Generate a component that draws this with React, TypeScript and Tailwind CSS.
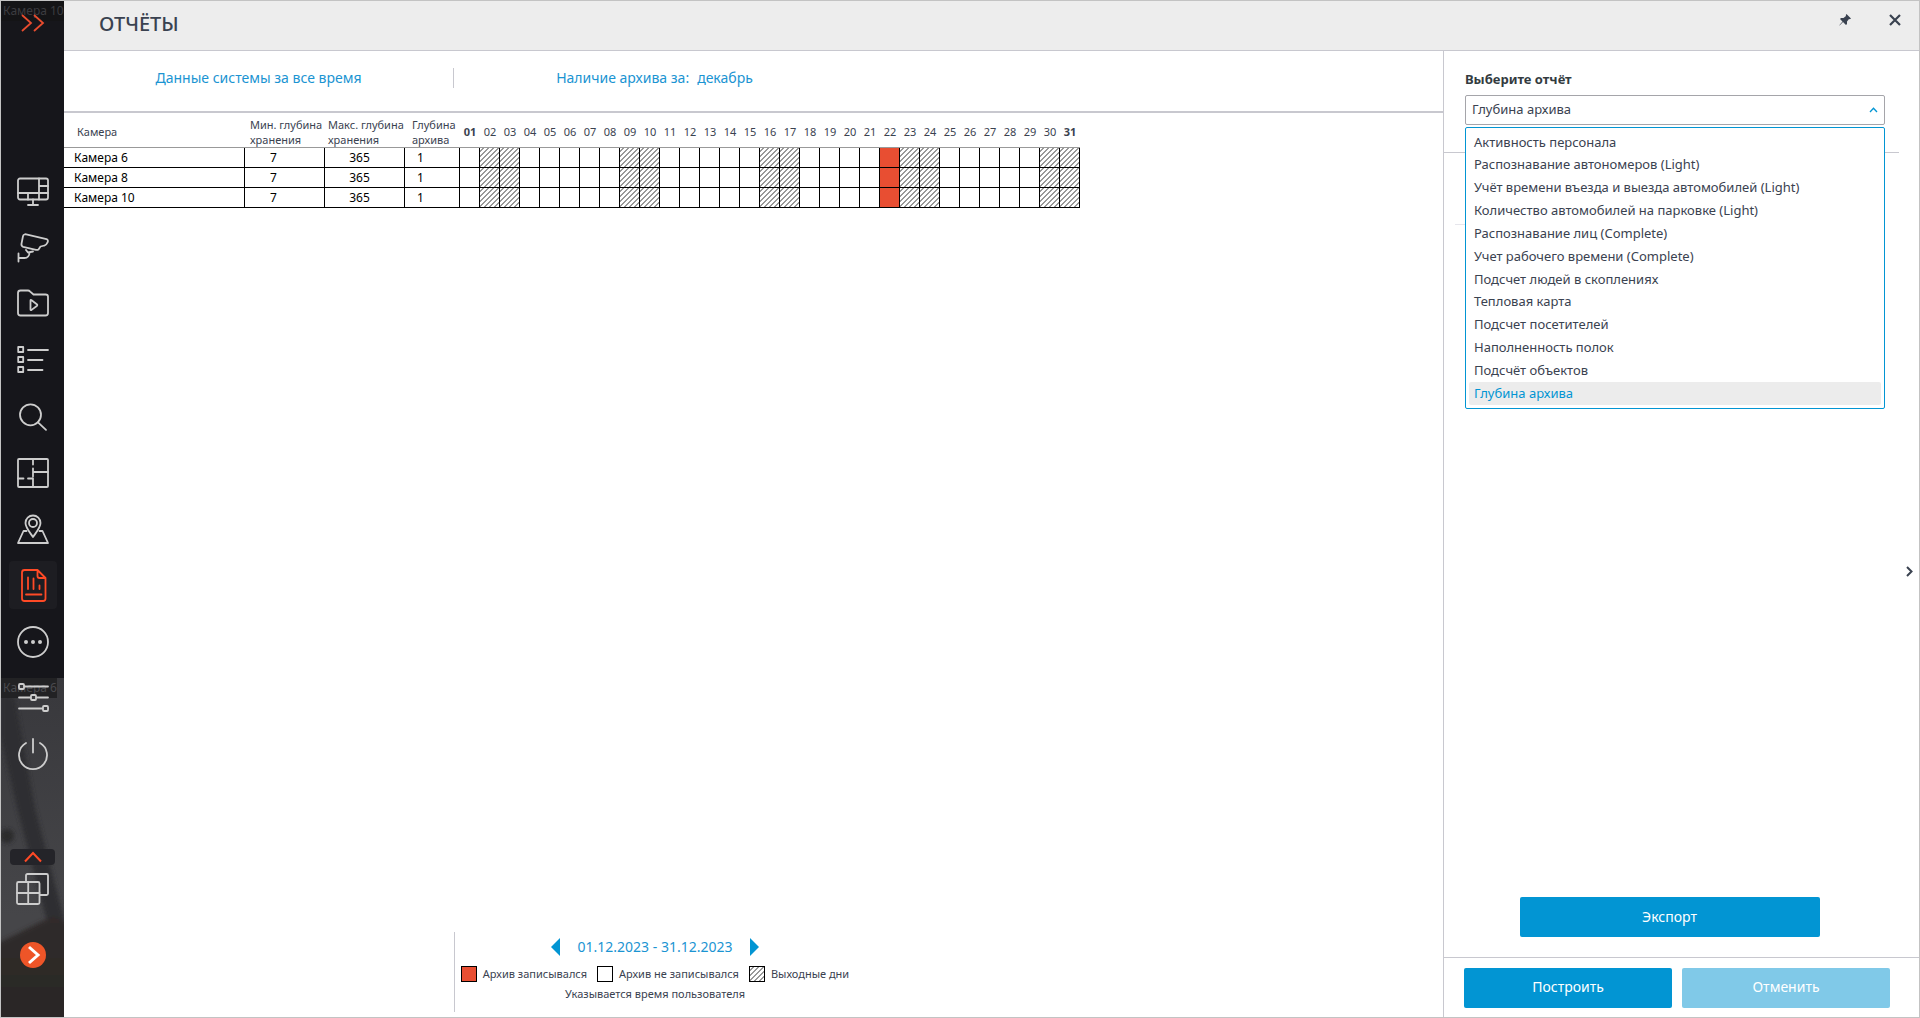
import { ReactNode } from "react";

const weekend = [2, 3, 9, 10, 16, 17, 23, 24, 30, 31];
const days = Array.from({ length: 31 }, (_, i) => i + 1);
const cameras = ["Камера 6", "Камера 8", "Камера 10"];
const reports = [
  "Активность персонала",
  "Распознавание автономеров (Light)",
  "Учёт времени въезда и выезда автомобилей (Light)",
  "Количество автомобилей на парковке (Light)",
  "Распознавание лиц (Complete)",
  "Учет рабочего времени (Complete)",
  "Подсчет людей в скоплениях",
  "Тепловая карта",
  "Подсчет посетителей",
  "Наполненность полок",
  "Подсчёт объектов",
  "Глубина архива",
];

const hatch =
  "bg-[linear-gradient(135deg,#fff_28%,#999_30%,#999_50%,#fff_50%,#fff_78%,#999_80%)] bg-size-[5px_5px]";

function Icon({ children }: { children: ReactNode }) {
  return (
    <svg
      className="size-9"
      viewBox="0 0 36 36"
      fill="none"
      stroke="currentColor"
      strokeWidth="1.8"
      strokeLinejoin="round"
      strokeLinecap="round"
      aria-hidden="true"
    >
      {children}
    </svg>
  );
}

const navItems: { label: string; icon: ReactNode; active?: boolean }[] = [
  {
    label: "Мониторы",
    icon: (
      <Icon>
        <rect x="3" y="4.500" width="30" height="21" rx="2" />
        <path d="M3 19H33M24 4.500V25.500M24 12H33M13 19V25.500M18 25.500V30.500M13 31H23" />
      </Icon>
    ),
  },
  {
    label: "Камеры",
    icon: (
      <Icon>
        <path d="M9.500 4.500C10 4.200 10.600 4.200 11.200 4.300L31.500 9.200C33 9.700 33.300 11 32.500 12.500C31.800 14 31.200 15.500 29.500 15.500L25.500 16.500L23.500 19.500C22.800 19.900 22 20 21 19.800L8.200 16.800C6.700 16.300 6.200 15.300 6.500 13.800L8 6.200C8.200 5.300 8.800 4.700 9.500 4.500Z" />
        <path d="M11 20L13 22.500L18 21.500M14.500 22.500C14.500 25.500 12.500 28 9.500 28H3.500M3.500 23.500V31.500" />
      </Icon>
    ),
  },
  {
    label: "Архив",
    icon: (
      <Icon>
        <path d="M3 7C3 5.500 4 4.500 5.500 4.500H13C14 4.500 14.500 4.900 15.200 5.600L18.500 8.500H30.500C32 8.500 33 9.300 33 10.800V27C33 28.500 32 29.500 30.500 29.500H5.500C4 29.500 3 28.500 3 27Z" />
        <path d="M15.500 14.500V23.500C15.500 24.200 16 24.300 16.600 23.900L21.800 20C22.500 19.400 22.500 18.800 21.800 18.200L16.600 14.200C16 13.800 15.500 13.900 15.500 14.500Z" />
      </Icon>
    ),
  },
  {
    label: "События",
    icon: (
      <Icon>
        <path d="M3.200 4h5v5h-5ZM3.200 14h5v5h-5ZM3.200 24h5v5h-5ZM13 7H33M13 17H27.500M13 27H27.500" />
      </Icon>
    ),
  },
  {
    label: "Поиск",
    icon: (
      <Icon>
        <circle cx="15.500" cy="15.800" r="10.500" />
        <path d="M23 23.300L31 30.800" />
      </Icon>
    ),
  },
  {
    label: "План",
    icon: (
      <Icon>
        <rect x="3" y="4" width="30" height="28" rx="1" />
        <path d="M18 4V9.500M18 13.500V21.500M18 17H33M3 23.500H8.500M13 23.500H18V32" />
      </Icon>
    ),
  },
  {
    label: "Карта",
    icon: (
      <Icon>
        <path d="M18 26C14.500 21 10.500 16.500 10.500 12A7.500 7.500 0 0 1 25.500 12C25.500 16.500 21.500 21 18 26Z" />
        <circle cx="18" cy="12" r="4" />
        <path d="M11.500 20H8.500L3 32H33L27.500 20H24.500" />
      </Icon>
    ),
  },
  {
    label: "Отчёты",
    active: true,
    icon: (
      <Icon>
        <path d="M9.500 3H22.500L30.500 11V31.500C30.500 33 29.500 34 28 34H9.500C8 34 7 33 7 31.500V5.500C7 4 8 3 9.500 3ZM22.500 3V9C22.500 10.300 23.200 11 24.500 11H30.500M13 10.500V22M18.500 11.500V22M24.500 18.500V22M11 27.500H26.500" />
      </Icon>
    ),
  },
  {
    label: "Ещё",
    icon: (
      <Icon>
        <circle cx="18" cy="18" r="15" />
        <g fill="currentColor" stroke="none">
          <circle cx="11" cy="18" r="2" />
          <circle cx="18" cy="18" r="2" />
          <circle cx="25" cy="18" r="2" />
        </g>
      </Icon>
    ),
  },
  {
    label: "Настройки",
    icon: (
      <Icon>
        <path d="M4 6.500H33M4 17.500H33M4 28.500H33" />
        <g fill="#3a3a3d">
          <rect x="4" y="4" width="5" height="5" rx="1" />
          <rect x="16" y="15" width="5" height="5" rx="1" />
          <rect x="28" y="26" width="5" height="5" rx="1" />
        </g>
      </Icon>
    ),
  },
  {
    label: "Выход",
    icon: (
      <Icon>
        <path d="M18 3V16.500M11 7A14 14 0 1 0 25 7" />
      </Icon>
    ),
  },
];

function Sidebar() {
  return (
    <aside className="relative flex w-[63px] shrink-0 flex-col items-center overflow-hidden bg-[#16161b] text-[#cdcdcd]">
      <svg
        className="absolute inset-x-0 bottom-0 h-[339px] w-full"
        viewBox="0 0 63 339"
        preserveAspectRatio="none"
        aria-hidden="true"
      >
        <defs>
          <linearGradient id="wall" x1="0" y1="0" x2="0" y2="1">
            <stop offset="0" stopColor="#38383c" />
            <stop offset="0.7" stopColor="#464649" />
          </linearGradient>
          <linearGradient id="floor" x1="0" y1="0" x2="0" y2="1">
            <stop offset="0" stopColor="#302c2b" />
            <stop offset="1" stopColor="#2a2725" />
          </linearGradient>
          <filter id="soft">
            <feGaussianBlur stdDeviation="2" />
          </filter>
        </defs>
        <rect width="63" height="339" fill="url(#wall)" />
        <g filter="url(#soft)">
          <path d="M0 15L14 20L34 130L63 240V262L45 240L16 130L0 60Z" fill="#2f2f32" />
          <circle cx="6" cy="158" r="7" fill="#29292c" />
          <path d="M-5 266L52 238L68 245V345H-5Z" fill="url(#floor)" />
        </g>
      </svg>
      <span className="absolute left-0 top-0 flex h-5 w-full items-center whitespace-nowrap bg-[#141416] pl-0.5 text-xs text-[#3c3c40]">
        Камера 10
      </span>
      <span className="absolute bottom-[319px] left-0 flex h-5 w-14 items-center whitespace-nowrap bg-[#222224] pl-0.5 text-xs text-[#4a4a4e]">
        Камера 6
      </span>
      <button type="button" aria-label="Развернуть меню" className="relative mt-3 text-[#e84c2e]">
        <svg className="h-5 w-6" viewBox="0 0 24 20" fill="none" stroke="currentColor" strokeWidth="1.800" aria-hidden="true">
          <path d="M1 2L10 10L1 18M13 2L22 10L13 18" />
        </svg>
      </button>
      <nav className="relative mt-[135px] flex h-[610px] flex-col justify-between">
        {navItems.map((item) => (
          <button
            key={item.label}
            type="button"
            aria-label={item.label}
            className={
              item.active
                ? "grid size-12 place-items-center rounded bg-[#1d1d22] text-[#ff4a26]"
                : "grid size-12 place-items-center"
            }
          >
            {item.icon}
          </button>
        ))}
      </nav>
      <div className="relative mt-auto flex flex-col items-center pb-[49px]">
        <button type="button" aria-label="Свернуть" className="grid h-4 w-[45px] place-items-center rounded bg-[#242429] text-[#ff4a26]">
          <svg className="h-3 w-5" viewBox="0 0 20 12" fill="none" stroke="currentColor" strokeWidth="2" aria-hidden="true">
            <path d="M2 10.500L10 2L18 10.500" />
          </svg>
        </button>
        <button type="button" aria-label="Окна" className="mt-1.5">
          <Icon>
            <path d="M11 10V4.500C11 3.500 11.500 3 12.500 3H31.500C32.500 3 33 3.500 33 4.500V22.500C33 23.500 32.500 24 31.500 24H25" />
            <rect x="2" y="11" width="22.500" height="22" rx="1.500" />
            <path d="M13.200 11V33M2 22H24.500" />
          </Icon>
        </button>
        <button
          type="button"
          aria-label="Далее"
          className="mt-[35px] grid size-[26px] place-items-center rounded-full bg-[#ee5528] text-white"
        >
          <svg className="size-[26px]" viewBox="0 0 26 26" fill="none" stroke="currentColor" strokeWidth="3" aria-hidden="true">
            <path d="M9 5L18 13L9 21" />
          </svg>
        </button>
      </div>
    </aside>
  );
}

function dayClass(day: number) {
  if (day === 22) return "border-r border-b border-black bg-[#e84e32] p-0";
  if (weekend.includes(day)) return "border-r border-b border-black p-0 " + hatch;
  return "border-r border-b border-black p-0";
}

function ArchiveTable() {
  return (
    <table className="w-[1016px] table-fixed border-separate border-spacing-0 text-xs text-black">
      <colgroup>
        <col className="w-[181px]" />
        <col className="w-20" />
        <col className="w-20" />
        <col className="w-[55px]" />
        {days.map((d) => (
          <col key={d} className="w-5" />
        ))}
      </colgroup>
      <thead className="text-[11px] leading-[15px] text-[#3a4250]">
        <tr className="h-[35px]">
          <th className="border-b border-[#999] p-0 pt-[3px] pl-[13px] text-left font-normal">Камера</th>
          <th className="whitespace-nowrap border-b border-[#999] p-0 pt-[3px] pl-[5px] text-left font-normal">
            Мин. глубина
            <br />
            хранения
          </th>
          <th className="whitespace-nowrap border-b border-[#999] p-0 pt-[3px] pl-[3px] text-left font-normal">
            Макс. глубина
            <br />
            хранения
          </th>
          <th className="whitespace-nowrap border-b border-[#999] p-0 pt-[3px] pl-[7px] text-left font-normal">
            Глубина
            <br />
            архива
          </th>
          {days.map((d) => (
            <th
              key={d}
              className={
                d === 1 || d === 31
                  ? "border-b border-[#999] p-0 pt-[3px] text-center font-bold"
                  : "border-b border-[#999] p-0 pt-[3px] text-center font-normal"
              }
            >
              {String(d).padStart(2, "0")}
            </th>
          ))}
        </tr>
      </thead>
      <tbody className="leading-[19px]">
        {cameras.map((name) => (
          <tr key={name} className="h-5">
            <td className="border-r border-b border-black p-0 pl-2.5">{name}</td>
            <td className="border-r border-b border-black p-0 pr-[22px] text-center">7</td>
            <td className="border-r border-b border-black p-0 pr-2.5 text-center">365</td>
            <td className="border-r border-b border-black p-0 pl-3">1</td>
            {days.map((d) => (
              <td key={d} className={dayClass(d)} />
            ))}
          </tr>
        ))}
      </tbody>
    </table>
  );
}

function Legend() {
  return (
    <footer className="mb-[5px] ml-[390px] flex h-20 w-[401px] flex-col items-center border-l border-[#c8c8cf]">
      <div className="flex h-[30px] items-center gap-[18px] text-sm text-[#1b94d2]">
        <button type="button" aria-label="Предыдущий период">
          <svg className="h-[18px] w-[9px]" viewBox="0 0 9 18" fill="#0295d3" aria-hidden="true">
            <path d="M9 0V18L0 9Z" />
          </svg>
        </button>
        <span>01.12.2023 - 31.12.2023</span>
        <button type="button" aria-label="Следующий период">
          <svg className="h-[18px] w-[9px]" viewBox="0 0 9 18" fill="#0295d3" aria-hidden="true">
            <path d="M0 0V18L9 9Z" />
          </svg>
        </button>
      </div>
      <ul className="mt-0.5 flex items-center gap-2.5 whitespace-nowrap text-[11px] leading-5 text-[#3a4250]">
        <li className="flex items-center gap-1.5">
          <span className="size-4 border border-black bg-[#e84e32]" />
          Архив записывался
        </li>
        <li className="flex items-center gap-1.5">
          <span className="size-4 border border-black bg-white" />
          Архив не записывался
        </li>
        <li className="flex items-center gap-1.5">
          <span className={"size-4 border border-black " + hatch} />
          Выходные дни
        </li>
      </ul>
      <p className="text-[11px] leading-5 text-[#3a4250]">Указывается время пользователя</p>
    </footer>
  );
}

function ReportPanel() {
  return (
    <aside className="flex w-[476px] shrink-0 flex-col border-l border-[#c8c8cf]">
      <div className="flex flex-1">
        <div className="flex flex-1 flex-col">
          <div className="flex h-[102px] flex-col border-b border-[#c8c8cf] pl-[21px] pr-3.5 pt-[18px]">
            <label htmlFor="report" className="text-[13px] leading-5 font-bold text-[#333b3f]">
              Выберите отчёт
            </label>
            <div className="relative mt-1.5">
              <select
                id="report"
                defaultValue="Глубина архива"
                className="block h-[30px] w-full appearance-none rounded-xs border border-[#a5a5aa] bg-white pl-1.5 text-[13px] text-[#3a4250] outline-none"
              >
                {reports.map((r) => (
                  <option key={r}>{r}</option>
                ))}
              </select>
              <svg
                className="pointer-events-none absolute right-[7px] top-3 h-[6px] w-[9px]"
                viewBox="0 0 9 6"
                fill="none"
                stroke="#0295d3"
                strokeWidth="1.300"
                aria-hidden="true"
              >
                <path d="M1 5L4.500 1.200L8 5" />
              </svg>
              <ul
                role="listbox"
                aria-label="Отчёты"
                className="absolute inset-x-0 top-8 z-10 flex h-[282px] flex-col rounded-xs border border-[#0295d3] bg-white p-[3px]"
              >
                {reports.map((r) => (
                  <li
                    key={r}
                    role="option"
                    aria-selected={r === "Глубина архива"}
                    className="flex flex-1 items-center whitespace-nowrap rounded-xs pl-[5px] text-[13px] text-[#3a4250] aria-selected:bg-[#ececec] aria-selected:text-[#0295d3]"
                  >
                    {r}
                  </li>
                ))}
              </ul>
            </div>
          </div>
          <div className="mr-4 ml-[11px] h-[72px] border-b border-[#e6e6ec]" />
          <div className="mt-auto mr-1 flex justify-center pb-5">
            <button type="button" className="h-10 w-[300px] rounded-xs bg-[#0295d3] text-sm text-white">
              Экспорт
            </button>
          </div>
        </div>
        <button
          type="button"
          aria-label="Показать панель"
          className="grid w-5 place-items-center pt-[134px] text-[#3a4250]"
        >
          <svg className="h-[11px] w-[7px]" viewBox="0 0 7 11" fill="none" stroke="currentColor" strokeWidth="2" aria-hidden="true">
            <path d="M1 1L5.500 5.500L1 10" />
          </svg>
        </button>
      </div>
      <div className="flex h-[60px] gap-2.5 border-t border-[#c8c8cf] pl-5 pr-[29px] pt-2.5">
        <button type="button" className="h-10 flex-1 rounded-xs bg-[#0295d3] pb-0.5 text-sm text-white">
          Построить
        </button>
        <button type="button" className="h-10 flex-1 rounded-xs bg-[#80c9e8] pb-0.5 text-sm text-white">
          Отменить
        </button>
      </div>
    </aside>
  );
}

export default function App() {
  return (
    <div className="flex min-h-screen border border-[#c3c3c3] bg-white font-['Noto_Sans',sans-serif]">
      <Sidebar />
      <div className="flex min-w-0 flex-1 flex-col">
        <header className="flex h-[50px] items-start border-b border-[#c8c8cf] bg-[#ededed] pl-[35px] pr-[18px] text-[#3a4250]">
          <h1 className="pt-[9px] text-xl leading-7 font-medium">ОТЧЁТЫ</h1>
          <button type="button" aria-label="Закрепить" className="ml-auto mt-3">
            <svg className="size-[14px]" viewBox="0 0 14 14" fill="currentColor" aria-hidden="true">
              <path d="M8.500 1L13 5.500L11.800 6.200L11 6L9 8.500L9 11L8 12L5 9L1.500 12.500L1.300 12.300L4.500 8.500L2 6L3 5L5.500 5L8 3L7.800 2Z" />
            </svg>
          </button>
          <button type="button" aria-label="Закрыть" className="ml-[37px] mt-[13px]">
            <svg className="size-3" viewBox="0 0 12 12" fill="none" stroke="currentColor" strokeWidth="2.200" aria-hidden="true">
              <path d="M1 1L11 11M11 1L1 11" />
            </svg>
          </button>
        </header>
        <div className="flex flex-1">
          <main className="flex min-w-0 flex-1 flex-col">
            <div className="flex h-[62px] border-b-2 border-[#c8c8cf] pt-[17px] text-sm leading-5 text-[#1b94d2]">
              <div className="flex h-5 w-[390px] items-start justify-center border-r border-[#c8c8cf]">
                <button type="button">Данные системы за все время</button>
              </div>
              <div className="flex h-5 w-[401px] items-start justify-center gap-2">
                <span>Наличие архива за:</span>
                <button type="button">декабрь</button>
              </div>
            </div>
            <ArchiveTable />
            <div className="flex-1" />
            <Legend />
          </main>
          <ReportPanel />
        </div>
      </div>
    </div>
  );
}
